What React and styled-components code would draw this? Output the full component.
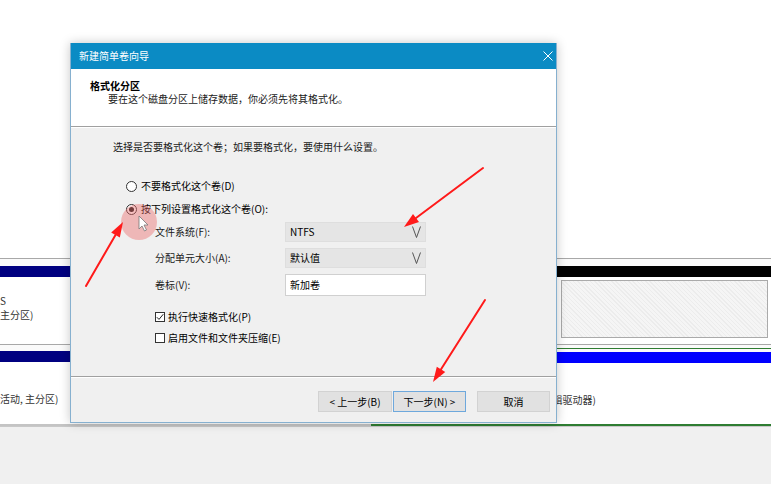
import React from 'react';
import styled, { createGlobalStyle } from 'styled-components';

const Global = createGlobalStyle`
  html, body { margin: 0; padding: 0; background: #fff; }
  * { box-sizing: border-box; }
`;

const FONT = `"Noto Sans CJK SC", "Noto Sans", sans-serif`;

// page + disk management background
const Page = styled.div`
  position: relative;
  width: 771px;
  height: 484px;
  overflow: hidden;
  background: #fff;
  font-family: ${FONT};
  font-size: 10px;
  color: #000;
`;

const Desktop = styled.div`
  display: flex;
  flex-direction: column;
  height: 100%;
`;

const Blank = styled.div`
  height: 258px;
  background: #fff;
`;

const DiskRow = styled.div`
  display: flex;
  height: ${p => p.$h}px;
  border-top: 1px solid #a8a8a8;
  background: #fafafa;
`;

const Partition = styled.div`
  display: flex;
  flex-direction: column;
  flex: ${p => (p.$w ? `0 0 ${p.$w}px` : '1')};
  padding-top: ${p => p.$pt || 0}px;
  margin-top: ${p => p.$mt || 0}px;
  border-top: ${p => (p.$frame ? `1px solid ${p.$frame}` : 'none')};
  border-bottom: ${p => (p.$bottom ? `2px solid ${p.$bottom}` : 'none')};
`;

const Band = styled.div`
  height: 11px;
  flex: 0 0 11px;
  background: ${p => p.$color};
`;

const PartBody = styled.div`
  flex: 1;
  background: #fff;
  padding: ${p => p.$pad || '0'};
  color: #333;
  line-height: 14px;
  white-space: nowrap;
`;

const HatchBox = styled.div`
  height: 100%;
  border: 1px solid #aaa;
  background: repeating-linear-gradient(
    45deg,
    #f5f5f5 0px,
    #f5f5f5 2px,
    #ececec 2px,
    #ececec 3px
  );
`;

const Status = styled.div`
  flex: 1;
  background: #f0f0f0;
  border-top: 1px solid #c8c8c8;
`;

// dialog window
const Dialog = styled.div`
  position: absolute;
  left: 70px;
  top: 43px;
  width: 487px;
  height: 380px;
  display: flex;
  flex-direction: column;
  background: #f0f0f0;
  border: 1px solid #86b0cf;
  border-top: none;
  box-shadow: 0 0 10px rgba(0, 0, 0, 0.22);
  z-index: 2;
`;

const TitleBar = styled.div`
  height: 26px;
  flex: 0 0 26px;
  display: flex;
  align-items: center;
  justify-content: space-between;
  padding: 0 3px 0 8px;
  background: #0b8bc4;
  color: #fff;
  line-height: 14px;
`;

const Header = styled.div`
  height: 58px;
  flex: 0 0 58px;
  background: #fff;
  border-bottom: 1px solid #a0a0a0;
  padding: 10px 0 0 19px;
  line-height: 13px;
`;

const HeaderTitle = styled.div`
  font-weight: bold;
`;

const HeaderSub = styled.div`
  padding-left: 18px;
  color: #1a1a1a;
`;

const Body = styled.div`
  flex: 1;
  padding: 12px 0 0 42px;
  border-top: 1px solid #fff;
  line-height: 14px;
`;

const Description = styled.div`
  color: #1a1a1a;
`;

const Options = styled.div`
  display: flex;
  flex-direction: column;
  gap: 9px;
  margin-top: 25px;
  padding-left: 13px;
`;

const Choice = styled.label`
  display: flex;
  align-items: center;
  height: 14px;
  gap: ${p => p.$gap || 4}px;
`;

const Radio = styled.span`
  width: 11px;
  height: 11px;
  border-radius: 50%;
  border: 1px solid #333;
  background: #fff;
  display: flex;
  align-items: center;
  justify-content: center;
  &::after {
    content: '';
    width: 5px;
    height: 5px;
    border-radius: 50%;
    background: ${p => (p.$on ? '#1a1a1a' : 'transparent')};
  }
`;

const Box = styled.span`
  width: 10px;
  height: 10px;
  border: 1px solid #333;
  background: #fff;
  display: flex;
  align-items: center;
  justify-content: center;
`;

const Fields = styled.div`
  display: grid;
  grid-template-columns: 130px 141px;
  row-gap: 6px;
  margin-top: 6px;
  padding-left: 42px;
  align-items: center;
`;

const FieldLabel = styled.div`
  color: #1a1a1a;
`;

const Combo = styled.div`
  height: 20px;
  display: flex;
  align-items: center;
  justify-content: space-between;
  padding: 0 4px;
  background: #e5e5e5;
  border: 1px solid #dedede;
`;

const TextInput = styled.div`
  height: 22px;
  display: flex;
  align-items: center;
  padding: 0 4px;
  background: #fff;
  border: 1px solid #d0d0d0;
`;

const Checks = styled.div`
  display: flex;
  flex-direction: column;
  gap: 7px;
  margin-top: 14px;
  padding-left: 42px;
`;

const Footer = styled.div`
  height: 46px;
  flex: 0 0 46px;
  display: flex;
  justify-content: flex-end;
  align-items: flex-start;
  padding: 14px 6px 0 0;
  border-top: 1px solid #a0a0a0;
  box-shadow: inset 0 1px 0 #fff;
`;

const Button = styled.div`
  width: ${p => p.$w || 74}px;
  height: 21px;
  margin-left: ${p => p.$ml || 0}px;
  display: flex;
  align-items: center;
  justify-content: center;
  background: #e1e1e1;
  border: 1px solid ${p => (p.$primary ? '#6ea8dc' : '#d2d2d2')};
  line-height: 14px;
`;

// annotation layer (red arrows, cursor highlight)
const Overlay = styled.svg`
  position: absolute;
  left: 0;
  top: 0;
  z-index: 5;
  pointer-events: none;
`;

const Chevron = () => (
  <svg width="9" height="12" viewBox="0 0 9 12">
    <polyline points="0.5,0.5 4.5,11.5 8.5,0.5" fill="none" stroke="#555" strokeWidth="1" />
  </svg>
);

const Tick = () => (
  <svg width="8" height="8" viewBox="0 0 8 8">
    <polyline points="0.8,4.2 3,6.4 7.3,1.2" fill="none" stroke="#222" strokeWidth="1" />
  </svg>
);

const CloseX = () => (
  <svg width="10" height="10" viewBox="0 0 10 10">
    <path d="M0.5 0.5 L9.5 9.5 M9.5 0.5 L0.5 9.5" stroke="#fff" strokeWidth="1" />
  </svg>
);

function head(x1, y1, x2, y2, len = 15, w = 5) {
  const dx = x2 - x1;
  const dy = y2 - y1;
  const L = Math.hypot(dx, dy);
  const ux = dx / L;
  const uy = dy / L;
  const bx = x2 - ux * len;
  const by = y2 - uy * len;
  return {
    base: [bx, by],
    pts: `${x2},${y2} ${bx - uy * w},${by + ux * w} ${bx + uy * w},${by - ux * w}`,
  };
}

const arrows = [
  [483, 168, 404, 227],
  [86, 286, 123, 222],
  [485, 300, 433, 382],
];

const Arrow = ({ a }) => {
  const [x1, y1, x2, y2] = a;
  const h = head(x1, y1, x2, y2);
  return (
    <g>
      <line x1={x1} y1={y1} x2={h.base[0]} y2={h.base[1]} stroke="#ff1a1a" strokeWidth="2" strokeLinecap="round" />
      <polygon points={h.pts} fill="#ff1a1a" />
    </g>
  );
};

export default function App() {
  return (
    <Page>
      <Global />
      <Desktop>
        <Blank />
        <DiskRow $h={86}>
          <Partition $pt={7}>
            <Band $color="#000080" />
            <PartBody $pad="17px 0 0 0">
              <div>S</div>
              <div>主分区)</div>
            </PartBody>
          </Partition>
          <Partition $w={214} $pt={7}>
            <Band $color="#000" />
            <PartBody $pad="3px 3px 6px 4px">
              <HatchBox />
            </PartBody>
          </Partition>
        </DiskRow>
        <DiskRow $h={82}>
          <Partition $pt={6} $bottom="#c4c4c4">
            <Band $color="#000080" />
            <PartBody $pad="30px 0 0 0">
              <div>活动, 主分区)</div>
            </PartBody>
          </Partition>
          <Partition $w={400} $mt={3} $pt={3} $frame="#2e7d32" $bottom="#2e7d32">
            <Band $color="#0000ff" />
            <PartBody $pad="30px 0 0 168px">
              <div>(逻辑驱动器)</div>
            </PartBody>
          </Partition>
        </DiskRow>
        <Status />
      </Desktop>

      <Dialog>
        <TitleBar>
          <span>新建简单卷向导</span>
          <CloseX />
        </TitleBar>
        <Header>
          <HeaderTitle>格式化分区</HeaderTitle>
          <HeaderSub>要在这个磁盘分区上储存数据，你必须先将其格式化。</HeaderSub>
        </Header>
        <Body>
          <Description>选择是否要格式化这个卷；如果要格式化，要使用什么设置。</Description>
          <Options>
            <Choice>
              <Radio />
              <span>不要格式化这个卷(D)</span>
            </Choice>
            <Choice>
              <Radio $on />
              <span>按下列设置格式化这个卷(O):</span>
            </Choice>
          </Options>
          <Fields>
            <FieldLabel>文件系统(F):</FieldLabel>
            <Combo>
              <span>NTFS</span>
              <Chevron />
            </Combo>
            <FieldLabel>分配单元大小(A):</FieldLabel>
            <Combo>
              <span>默认值</span>
              <Chevron />
            </Combo>
            <FieldLabel>卷标(V):</FieldLabel>
            <TextInput>新加卷</TextInput>
          </Fields>
          <Checks>
            <Choice $gap={3}>
              <Box>
                <Tick />
              </Box>
              <span>执行快速格式化(P)</span>
            </Choice>
            <Choice $gap={3}>
              <Box />
              <span>启用文件和文件夹压缩(E)</span>
            </Choice>
          </Checks>
        </Body>
        <Footer>
          <Button>&lt; 上一步(B)</Button>
          <Button $primary $w={73} $ml={1}>下一步(N) &gt;</Button>
          <Button $w={73} $ml={11}>取消</Button>
        </Footer>
      </Dialog>

      <Overlay width="771" height="484" viewBox="0 0 771 484">
        <circle cx="139" cy="222" r="18" fill="rgba(236,104,104,0.42)" />
        <path
          d="M139 216 L139 229 L142 226 L144.5 231 L146.5 230 L144 225 L148 225 Z"
          fill="#fff"
          stroke="#777"
          strokeWidth="0.8"
        />
        {arrows.map((a, i) => (
          <Arrow key={i} a={a} />
        ))}
      </Overlay>
    </Page>
  );
}
